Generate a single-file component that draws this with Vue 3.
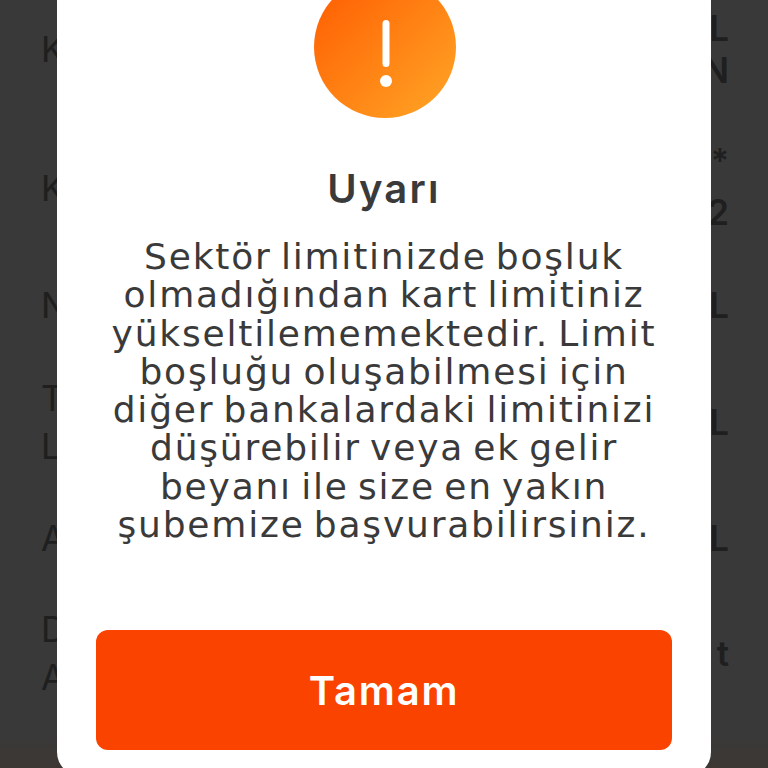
<script setup>
const rows = [
  { label: ['K'], value: [{ t: 'L', cls: 'big' }, { t: 'N', cls: 'big' }], cls: 'r1' },
  { label: ['K'], value: [{ t: '**', cls: 'small' }, { t: '2', cls: 'big' }], cls: 'r2' },
  { label: ['N'], value: [{ t: 'L', cls: 'big' }], cls: 'r3' },
  { label: ['T', 'L'], value: [{ t: 'L', cls: 'big' }], cls: 'r4' },
  { label: ['A'], value: [{ t: 'L', cls: 'big' }], cls: 'r5' },
  { label: ['D', 'A'], value: [{ t: 't', cls: 'big' }], cls: 'r6' }
]
const lines = [
  'Sektör limitinizde boşluk',
  'olmadığından kart limitiniz',
  'yükseltilememektedir. Limit',
  'boşluğu oluşabilmesi için',
  'diğer bankalardaki limitinizi',
  'düşürebilir veya ek gelir',
  'beyanı ile size en yakın',
  'şubemize başvurabilirsiniz.'
]
</script>

<template>
  <div class="page">
    <div class="list">
      <div v-for="(r, i) in rows" :key="i" class="row" :class="r.cls">
        <div class="label">
          <div v-for="(l, j) in r.label" :key="j">{{ l }}</div>
        </div>
        <div class="value">
          <div v-for="(v, j) in r.value" :key="j" :class="v.cls">{{ v.t }}</div>
        </div>
      </div>
    </div>
    <div class="overlay">
      <div class="modal">
        <div class="badge">
          <svg class="mark" viewBox="0 0 16 68" width="16" height="68">
            <rect x="4.5" y="0" width="7" height="47" rx="3.5" fill="#fff" />
            <circle cx="8" cy="61" r="6" fill="#fff" />
          </svg>
        </div>
        <h1 class="title">Uyarı</h1>
        <p class="message">
          <span v-for="l in lines" :key="l" class="line">{{ l }}</span>
        </p>
        <button class="ok" type="button">Tamam</button>
      </div>
    </div>
  </div>
</template>

<style scoped>
.page {
  position: relative;
  width: 768px;
  height: 768px;
  overflow: hidden;
  background: linear-gradient(to bottom, #393939 0, #393939 735px, #3d3733 768px);
  font-family: Inter, "Open Sans", sans-serif;
}
.list {
  display: flex;
  flex-direction: column;
  padding: 0 39px 0 41px;
  color: #1f1f1f;
}
.row {
  display: flex;
  justify-content: space-between;
  align-items: center;
  font-size: 35px;
}
.label { line-height: 48px; font-weight: 400; }
.value { text-align: right; font-weight: 600; }
.big { line-height: 42px; }
.small { line-height: 36px; font-size: 34px; margin-bottom: 12px; }
.r1 { height: 98px; }
.r2 { height: 180px; }
.r3 { height: 54px; }
.r4 { height: 180px; }
.r5 { height: 52px; }
.r6 { height: 177px; }
.overlay {
  position: absolute;
  inset: 0;
  display: flex;
  justify-content: center;
}
.modal {
  width: 654px;
  height: 806px;
  margin-top: -30px;
  box-sizing: border-box;
  padding: 6px 39px 0;
  background: #fff;
  border-radius: 24px;
  display: flex;
  flex-direction: column;
  align-items: center;
}
.badge {
  flex: none;
  width: 142px;
  height: 142px;
  margin-left: 2px;
  border-radius: 50%;
  background: linear-gradient(135deg, #ff5a00, #ffa726);
  display: flex;
  align-items: center;
  justify-content: center;
}
.mark { display: block; margin: 13px 0 0 1px; }
.title {
  margin: 46px 0 0;
  font-size: 40px;
  line-height: 50px;
  font-weight: 600;
  letter-spacing: 2.2px;
  color: #3a3a3a;
}
.message {
  margin: 24px 0 0;
  font-family: "DejaVu Sans", Inter, sans-serif;
  font-size: 36px;
  line-height: 38.3px;
  letter-spacing: 1.8px;
  word-spacing: -4px;
  color: #3a3a3a;
  text-align: center;
  width: 100%;
}
.line { display: block; white-space: nowrap; }
.ok {
  margin-top: 86px;
  width: 576px;
  height: 120px;
  flex: none;
  border: 0;
  border-radius: 12px;
  background: #fb4300;
  color: #fff;
  font-family: inherit;
  font-size: 40px;
  font-weight: 600;
  letter-spacing: 1.8px;
}
</style>
